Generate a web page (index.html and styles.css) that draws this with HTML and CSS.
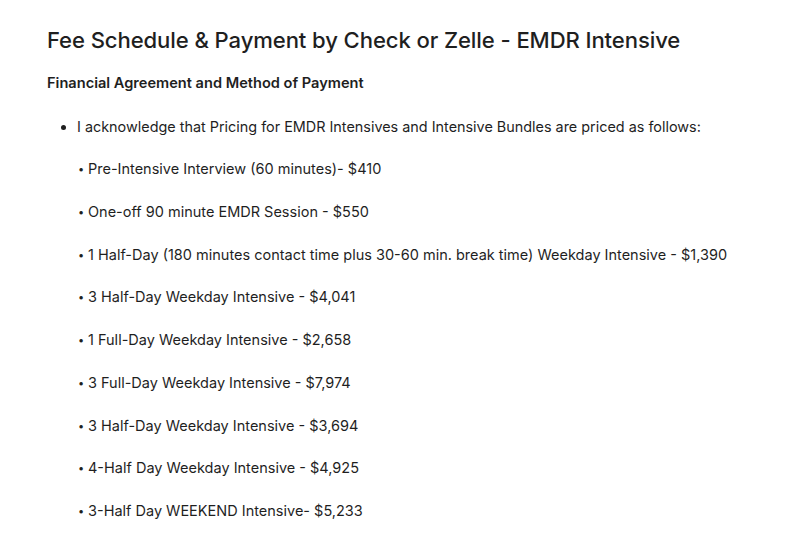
FILE: index.html
```html
<!DOCTYPE html>
<html>
<head>
<meta charset="utf-8">
<link rel="stylesheet" href="styles.css">
</head>
<body>
<main class="page">
  <h1 class="title">Fee Schedule &amp; Payment by Check or Zelle - EMDR Intensive</h1>
  <h2 class="subtitle">Financial Agreement and Method of Payment</h2>
  <ul class="list">
    <li class="item">I acknowledge that Pricing for EMDR Intensives and Intensive Bundles are priced as follows:</li>
  </ul>
  <div class="prices">
    <p class="price"><span class="dot">•</span>Pre-Intensive Interview (60 minutes)- $410</p>
    <p class="price"><span class="dot">•</span>One-off 90 minute EMDR Session - $550</p>
    <p class="price"><span class="dot">•</span>1 Half-Day (180 minutes contact time plus 30-60 min. break time) Weekday Intensive - $1,390</p>
    <p class="price"><span class="dot">•</span>3 Half-Day Weekday Intensive - $4,041</p>
    <p class="price"><span class="dot">•</span>1 Full-Day Weekday Intensive - $2,658</p>
    <p class="price"><span class="dot">•</span>3 Full-Day Weekday Intensive - $7,974</p>
    <p class="price"><span class="dot">•</span>3 Half-Day Weekday Intensive - $3,694</p>
    <p class="price"><span class="dot">•</span>4-Half Day Weekday Intensive - $4,925</p>
    <p class="price"><span class="dot">•</span>3-Half Day WEEKEND Intensive- $5,233</p>
  </div>
</main>
</body>
</html>
```

FILE: styles.css
```css
html, body {
  margin: 0;
  padding: 0;
  background: #ffffff;
}
body {
  font-family: Inter, "Noto Sans", "Liberation Sans", sans-serif;
  color: #1f1f1f;
}
.page {
  padding: 26px 0 0 47px;
}
.title {
  margin: 0;
  font-size: 22.1px;
  font-weight: 500;
  line-height: 28px;
  letter-spacing: -0.1px;
}
.subtitle {
  margin: 19px 0 0 0;
  font-size: 14.6px;
  font-weight: 600;
  line-height: 20px;
}
.list {
  margin: 24px 0 0 0;
  padding-left: 30px;
}
.item {
  font-size: 14.4px;
  line-height: 20px;
}
.prices {
  padding-left: 31px;
  display: flex;
  flex-direction: column;
  gap: 22.75px;
  margin-top: 22px;
}
.price {
  margin: 0;
  font-size: 14.5px;
  line-height: 20px;
}
.dot {
  display: inline-block;
  width: 10px;
  font-size: 11px;
  vertical-align: 1px;
}
```
